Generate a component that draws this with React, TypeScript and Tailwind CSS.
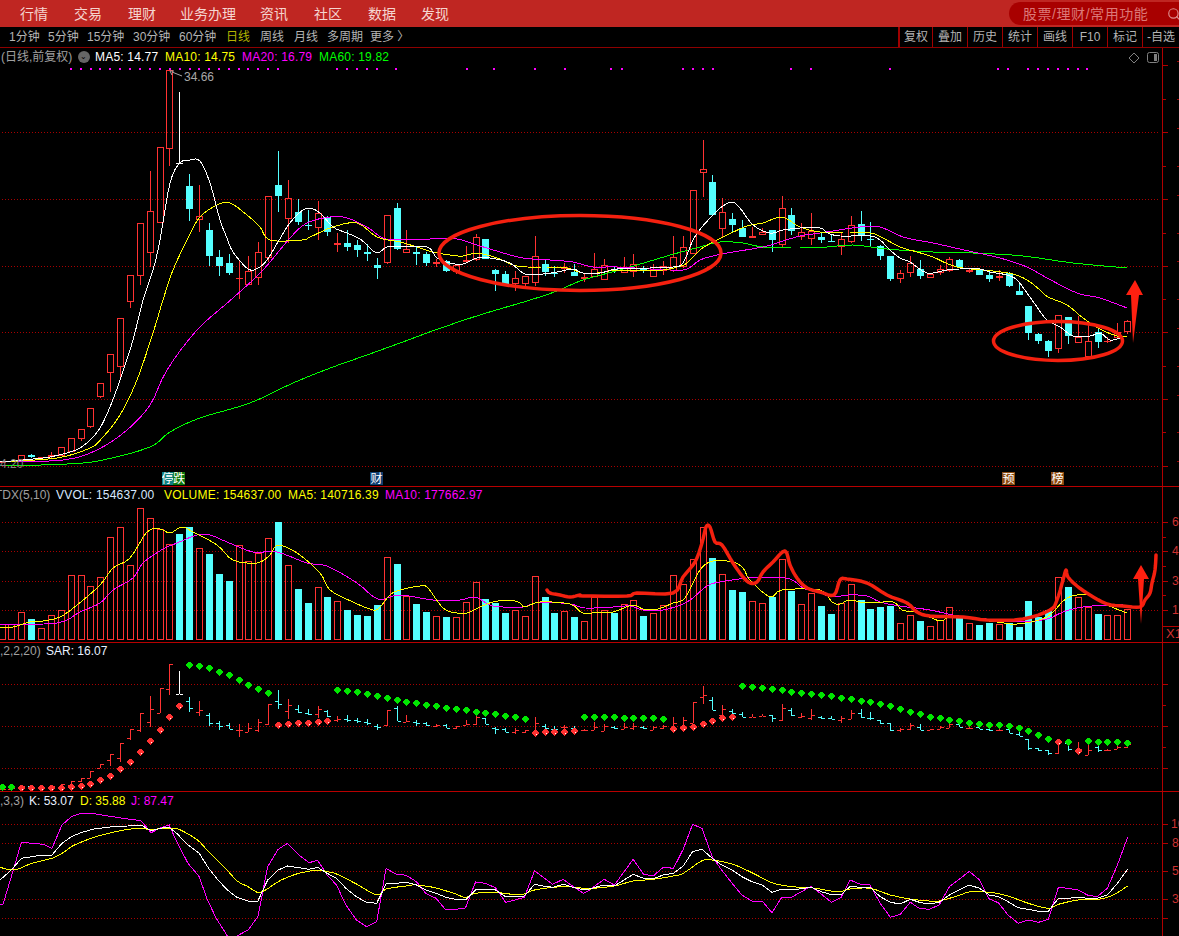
import { Search } from "lucide-react";

type P = [number, number];
const cx = (i: number) => Math.round(1.55 + 9.874 * i);
const ps = (a: P[]) => a.map(([x, y]) => `${x.toFixed(1)},${y.toFixed(1)}`).join(" ");
const smooth = (a: P[]): P[] => {
  const out: P[] = [];
  for (let i = 0; i < a.length - 1; i++) {
    const p0 = a[Math.max(i - 1, 0)];
    const p1 = a[i];
    const p2 = a[i + 1];
    const p3 = a[Math.min(i + 2, a.length - 1)];
    for (let k = 0; k < 4; k++) {
      const t = k / 4;
      const t2 = t * t;
      const t3 = t2 * t;
      const f = (v0: number, v1: number, v2: number, v3: number) =>
        0.5 * (2 * v1 + (v2 - v0) * t + (2 * v0 - 5 * v1 + 4 * v2 - v3) * t2 + (3 * v1 - v0 - 3 * v2 + v3) * t3);
      out.push([f(p0[0], p1[0], p2[0], p3[0]), f(p0[1], p1[1], p2[1], p3[1])]);
    }
  }
  out.push(a[a.length - 1]);
  return out;
};

const vol = [432,432,397,-417,445,406,391,286,286,319,292,172,142,256,85,115,148,192,-162,-142,205,-222,-282,-303,195,243,220,175,-126,256,-327,-369,322,-351,364,-390,-405,-408,-375,232,-252,
348,-372,-396,409,-411,412,367,307,-357,-369,-399,391,409,289,-351,-399,394,-411,424,352,391,-399,373,361,-408,400,376,286,313,238,142,-234,283,-330,-336,364,370,-351,238,-333,
373,340,-378,-402,370,313,-360,-387,-381,-378,430,405,-423,439,420,382,-415,430,-435,-429,432,-429,-441,-363,-411,-390,292,-321,350,381,-402,405,405,388];

const cs: number[][] = [
[462,462,463,463],[461,461,462,462],[455,455,460,460],[454,455,457,458],[457,457,458,458],[452,455,457,458],[447,447,456,456],[438,438,452,452],[429,429,439,441],[408,408,427,428],
[383,383,397,398],[354,354,373,392],[318,318,367,377],[275,275,302,308],[223,223,276,285],[171,211,253,267],[147,147,223,223],[70,70,149,166],[92,163,163,163],[174,186,209,221],
[185,216,220,232],[223,230,256,266],[250,257,266,276],[254,263,273,275],[260,278,279,299],[256,271,285,285],[242,252,278,285],[196,196,258,262],[151,185,196,212],[180,198,219,243],
[199,212,222,225],[210,225,226,230],[201,213,228,240],[216,217,232,236],[233,243,245,252],[230,243,247,251],[240,245,250,257],[244,252,254,261],[258,265,268,279],[215,215,263,264],
[203,208,249,250],[230,249,253,253],[247,252,254,265],[252,254,263,266],[259,262,264,267],[260,261,271,272],[265,265,272,274],[246,260,262,262],[234,237,260,261],[239,239,259,259],
[269,270,274,291],[271,274,284,285],[271,278,284,291],[276,276,284,287],[236,256,283,286],[260,264,272,276],[266,273,274,277],[263,267,269,273],[264,272,276,276],[273,277,279,282],
[253,269,277,277],[259,265,280,280],[266,269,271,273],[257,267,273,273],[254,264,272,277],[266,268,271,273],[264,269,277,277],[261,266,271,275],[236,257,271,272],[236,247,267,268],
[190,190,254,254],[140,169,173,197],[175,182,215,215],[198,212,229,237],[213,219,225,232],[220,228,237,237],[227,236,238,238],[228,232,235,235],[230,230,240,252],[196,208,245,248],
[208,215,231,235],[223,232,237,240],[213,231,239,245],[232,237,240,243],[235,241,242,242],[232,239,247,255],[216,225,242,243],[211,224,236,241],[222,239,240,247],[245,246,256,260],
[256,256,279,281],[270,273,279,283],[256,263,273,277],[260,269,276,279],[273,274,278,278],[265,269,273,275],[257,259,271,272],[259,260,267,268],[268,270,272,273],[268,269,275,275],
[272,275,279,282],[270,276,278,281],[272,273,286,287],[283,291,295,295],[306,306,333,340],[333,334,341,344],[340,341,351,357],[315,315,349,353],[317,317,336,344],[316,337,343,343],
[322,341,357,357],[328,332,342,348],[337,341,342,343],[323,332,338,338],[320,321,332,334],
];

const ma5: P[] = [[0,462],[33,459],[50,457],[70,452],[80,448],[90,440],[100,428],[110,407],[120,380],[133,340],[143,300],[153,270],[160,240],[170,183],[180,163],[190,160],[200,161],[210,183],[220,220],[227,238],[233,252],[248,269],[258,268],[267,260],[278,242],[287,227],[297,215],[308,208],[320,213],[333,227],[347,233],[360,239],[367,245],[377,253],[387,247],[400,247],[427,247],[437,258],[450,263],[463,264],[477,258],[490,258],[510,263],[525,274],[543,274],[557,272],[573,269],[583,273],[600,273],[617,269],[650,268],[673,267],[683,263],[693,240],[702,227],[715,213],[723,206],[732,202],[740,208],[753,225],[770,233],[783,230],[800,228],[820,228],[828,233],[840,236],[870,236],[880,240],[890,250],[900,258],[910,262],[927,273],[947,270],[960,269],[980,269],[990,272],[1007,275],[1017,280],[1027,293],[1037,307],[1047,320],[1060,327],[1073,336],[1090,336],[1100,333],[1110,340],[1120,338]];
const ma10: P[] = [[0,462],[57,458],[90,448],[103,437],[120,415],[137,380],[153,333],[163,300],[173,270],[188,238],[200,217],[217,205],[230,203],[247,215],[260,227],[270,240],[302,240],[310,237],[333,227],[357,223],[377,237],[400,242],[417,247],[433,252],[450,255],[463,256],[477,253],[497,258],[513,265],[527,267],[547,267],[567,268],[583,273],[597,273],[617,270],[637,271],[663,270],[677,267],[687,263],[700,250],[713,242],[727,235],[747,226],[763,223],[782,217],[800,227],[820,232],[843,233],[870,233],[883,238],[900,247],[917,252],[933,257],[957,267],[993,271],[1013,274],[1027,280],[1040,290],[1048,297],[1067,305],[1083,318],[1100,329],[1117,336],[1127,336]];
const ma20: P[] = [[0,462],[63,460],[97,450],[127,430],[150,405],[167,370],[197,330],[233,298],[263,270],[290,238],[307,223],[330,217],[347,218],[367,227],[383,238],[400,240],[430,239],[457,239],[477,245],[500,252],[523,258],[550,260],[573,262],[593,267],[617,267],[670,270],[687,269],[700,260],[717,255],[733,252],[763,247],[777,243],[800,236],[820,233],[860,227],[880,227],[903,237],[933,243],[973,252],[1000,258],[1027,267],[1047,278],[1077,293],[1100,298],[1127,308]];
const ma60: P[] = [[0,466],[67,464],[103,460],[150,447],[170,432],[200,418],[250,403],[293,383],[333,367],[367,355],[400,343],[438,329],[483,314],[527,301],[557,291],[583,280],[627,268],[667,256],[700,247],[720,242],[743,243],[763,247],[800,248],[827,247],[853,245],[887,249],[933,252],[973,253],[1023,256],[1073,263],[1127,268]];

const volY: P[] = [[0,628],[13,627],[30,622],[43,621],[60,617],[77,605],[100,585],[113,568],[130,558],[147,532],[160,529],[170,533],[182,527],[193,532],[217,545],[233,560],[257,563],[270,555],[278,545],[297,553],[320,573],[330,590],[353,602],[370,609],[378,609],[390,595],[400,590],[420,586],[428,588],[443,608],[457,613],[467,613],[480,607],[493,602],[510,600],[520,603],[525,607],[540,602],[570,604],[583,613],[600,612],[613,612],[633,605],[643,609],[658,609],[673,603],[685,598],[700,570],[713,561],[733,562],[743,568],[750,580],[770,597],[782,590],[820,590],[832,602],[840,604],[850,600],[867,603],[893,602],[902,610],[920,613],[940,621],[953,617],[997,622],[1017,624],[1047,617],[1067,598],[1090,595],[1107,605],[1127,613]];
const volM: P[] = [[0,624],[57,623],[80,612],[100,603],[113,590],[133,578],[143,563],[163,549],[177,543],[197,535],[210,535],[227,542],[253,552],[277,552],[307,563],[327,566],[357,583],[378,599],[400,595],[433,600],[460,600],[475,597],[490,605],[503,607],[523,607],[540,602],[570,604],[585,608],[613,607],[630,606],[643,610],[663,610],[687,602],[707,586],[720,582],[747,578],[763,577],[790,579],[803,588],[820,593],[833,597],[848,595],[867,596],[880,602],[900,606],[930,610],[953,615],[977,618],[1020,622],[1047,619],[1063,612],[1083,607],[1123,604]];
const hand: P[] = [[547,590],[550,593],[560,595],[570,597],[580,595],[583,596],[627,596],[637,593],[673,593],[683,577],[695,562],[702,543],[706,527],[710,527],[715,542],[722,545],[733,563],[743,577],[750,583],[757,582],[763,572],[773,562],[785,551],[790,565],[797,578],[807,588],[820,592],[834,595],[840,580],[847,579],[867,583],[887,595],[907,603],[917,612],[930,616],[963,617],[987,620],[1023,619],[1050,610],[1057,600],[1063,580],[1066,570],[1068,577],[1077,586],[1090,595],[1107,604],[1123,606],[1140,607],[1145,600],[1150,593],[1152,583],[1155,570],[1156,555]];

const sarG: Record<number, number> = {0:441,1:440,19:75,20:79,21:84,22:95,23:104,24:120,25:134,26:147,27:158,34:150,35:153,36:156,37:161,38:167,39:173,40:179,41:185,42:188,43:194,44:198,45:204,46:207,47:210,48:216,49:219,50:222,51:227,52:230,53:237,59:230,60:230,61:230,62:230,63:233,64:233,65:233,66:233,67:237,75:137,76:140,77:143,78:146,79:150,80:155,81:158,82:161,83:165,84:168,85:173,86:176,87:182,88:185,89:191,90:197,91:206,92:215,93:221,94:230,95:233,96:239,97:242,98:248,99:251,100:254,101:254,102:257,103:263,104:272,105:284,106:296,108:305,110:302,111:305,112:305,113:305,114:308};
const sarR: Record<number, number> = {2:443,3:443,4:443,5:443,6:443,7:440,8:437,9:432,10:420,11:407,12:386,13:366,14:336,15:303,16:269,17:231,18:198,28:254,29:252,30:248,31:249,32:245,33:242,54:279,55:276,56:276,57:276,58:272,68:267,69:264,70:261,71:251,72:242,73:233,74:230,107:305,109:332};

const kz = (a: P[], off: number): P[] => a.map(([x, y]) => [off + x / 2.66, 790 + y / 3]);
const jA = kz([[0,343],[8,343],[30,260],[57,157],[85,160],[115,163],[138,175],[165,105],[190,80],[215,70],[250,71],[300,80],[340,87],[375,92],[402,128],[430,112],[450,105],[470,155],[500,220],[530,260],[550,325],[575,385],[605,438],[630,438],[660,420],[686,380],[712,230],[740,178],[765,160],[795,195],[822,218],[845,211],[870,255],[895,285],[920,345],[948,390],[975,410],[1002,395],[1027,235],[1052,252],[1080,256],[1108,275],[1132,310],[1160,325],[1186,360],[1212,358],[1238,354],[1265,276],[1290,280],[1318,293],[1345,337],[1370,330],[1395,322],[1422,242],[1445,262],[1470,283],[1498,268],[1525,290],[1552,310],[1568,300]], 0).concat(kz([[0,298],[38,268],[65,285],[115,208],[142,252],[168,258],[195,232],[222,235],[248,178],[273,103],[298,115],[325,200],[350,240],[378,280],[404,315],[431,333],[458,333],[484,368],[510,322],[537,321],[588,289],[615,312],[642,337],[668,322],[692,270],[719,283],[745,285],[772,340],[799,382],[825,373],[852,337],[876,355],[902,358],[929,345],[956,290],[982,268],[1009,244],[1036,270],[1062,327],[1086,338],[1112,375],[1139,400],[1166,390],[1193,397],[1219,388],[1246,292],[1272,295],[1298,300],[1323,315],[1349,320],[1376,295],[1403,225],[1430,142]], 590));
const kA = kz([[0,270],[30,240],[57,205],[85,200],[110,195],[138,195],[165,160],[190,140],[215,128],[250,117],[300,110],[340,108],[375,105],[402,122],[430,114],[450,112],[470,130],[500,165],[530,190],[555,235],[580,270],[605,300],[630,322],[660,333],[686,333],[712,270],[740,240],[765,228],[795,233],[822,238],[845,232],[870,250],[895,265],[920,295],[948,320],[975,337],[1002,340],[1027,282],[1052,280],[1080,277],[1108,285],[1132,300],[1160,310],[1186,322],[1212,328],[1238,330],[1265,300],[1290,297],[1318,300],[1345,320],[1370,320],[1395,318],[1422,283],[1445,288],[1470,292],[1498,283],[1525,292],[1552,300],[1568,297]], 0).concat(kz([[0,296],[38,285],[65,288],[115,253],[142,265],[168,266],[195,255],[222,250],[248,228],[273,185],[298,178],[325,205],[350,225],[378,240],[404,260],[431,275],[458,285],[484,307],[510,298],[537,300],[588,292],[615,305],[642,314],[668,314],[692,289],[719,292],[745,292],[772,320],[799,337],[825,342],[852,328],[876,337],[902,342],[929,337],[956,315],[982,300],[1009,285],[1036,295],[1062,315],[1086,320],[1112,335],[1139,353],[1166,358],[1193,364],[1219,364],[1246,325],[1272,325],[1298,322],[1323,325],[1349,325],[1376,315],[1403,280],[1430,238]], 590));
const dA = kz([[0,232],[38,240],[85,220],[138,205],[165,190],[190,170],[215,157],[250,142],[300,127],[340,118],[375,116],[402,118],[450,115],[480,120],[525,150],[555,185],[600,235],[630,272],[660,290],[692,307],[740,275],[765,262],[795,250],[845,240],[870,245],[895,252],[948,282],[1002,315],[1027,297],[1080,288],[1108,285],[1160,294],[1212,312],[1238,322],[1265,310],[1318,307],[1370,314],[1395,312],[1422,300],[1498,290],[1568,297]], 0).concat(kz([[0,296],[65,288],[115,273],[168,268],[222,258],[248,250],[298,212],[325,210],[378,222],[431,248],[484,278],[537,290],[588,293],[642,303],[668,304],[692,297],[745,295],[799,315],[852,327],[902,333],[929,333],[982,316],[1009,306],[1062,307],[1112,318],[1166,340],[1219,355],[1246,343],[1298,330],[1349,328],[1376,322],[1403,308],[1430,288]], 590));

const RED = "#ff3232";
const CYAN = "#54ffff";
const topDots = [71,81,91,100,110,120,130,140,150,160,170,180,190,199,209,219,229,239,248,258,268,278,337,347,357,367,377,396,467,494,535,565,611,622,683,693,703,713,791,811,890,998,1008,1028,1038,1048,1058,1068,1078,1087];

function Line({ pts, c, round }: { pts: P[]; c: string; round?: boolean }) {
  return <polyline points={ps(round ? smooth(pts) : pts)} fill="none" stroke={c} strokeWidth={1} shapeRendering="crispEdges" />;
}

function Grid({ ys }: { ys: number[] }) {
  return (
    <g shapeRendering="crispEdges">
      {ys.map((y) => (
        <line key={y} x1={2} x2={1160} y1={y + 0.5} y2={y + 0.5} stroke="#a80000" strokeWidth={1} strokeDasharray="1 2" />
      ))}
    </g>
  );
}

function Axis({ top, h, ticks }: { top: number; h: number; ticks: [number, number][] }) {
  return (
    <g shapeRendering="crispEdges">
      <rect x={1162} y={top} width={1} height={h} fill="#b00000" />
      {ticks.map(([y, l]) => (
        <rect key={y} x={1163} y={y} width={l} height={1} fill="#b00000" />
      ))}
    </g>
  );
}

function Hollow({ x, y, h, c }: { x: number; y: number; h: number; c: string }) {
  return (
    <g fill={c}>
      <rect x={x - 3} y={y} width={7} height={1} />
      <rect x={x - 3} y={y + h - 1} width={7} height={1} />
      <rect x={x - 3} y={y} width={1} height={h} />
      <rect x={x + 3} y={y} width={1} height={h} />
    </g>
  );
}

function Panel({ top, h, children, labels }: { top: number; h: number; children: React.ReactNode; labels?: React.ReactNode }) {
  return (
    <div className="relative w-full shrink-0 overflow-hidden border-b border-[#b80000]" style={{ height: h + 1 }}>
      <svg width={1179} height={h} viewBox={`0 ${top} 1179 ${h}`} className="block">
        {children}
      </svg>
      {labels}
    </div>
  );
}

function dot(x: number, y: number) {
  const c = x + 0.5;
  return `${c - 0.5},${y - 3.5} ${c + 0.5},${y - 3.5} ${c + 3.5},${y - 0.5} ${c + 3.5},${y + 0.5} ${c + 0.5},${y + 3.5} ${c - 0.5},${y + 3.5} ${c - 3.5},${y + 0.5} ${c - 3.5},${y - 0.5}`;
}

const navItems: [string, string][] = [["行情", "ml-[20px]"], ["交易", "ml-[26px]"], ["理财", "ml-[26px]"], ["业务办理", "ml-[24px]"], ["资讯", "ml-[24px]"], ["社区", "ml-[26px]"], ["数据", "ml-[26px]"], ["发现", "ml-[25px]"]];
const periods: [string, string, string][] = [["1分钟", "w-[39px]", "text-[#b4b4b4]"], ["5分钟", "w-[39px]", "text-[#b4b4b4]"], ["15分钟", "w-[46px]", "text-[#b4b4b4]"], ["30分钟", "w-[46px]", "text-[#b4b4b4]"], ["60分钟", "w-[47px]", "text-[#b4b4b4]"], ["日线", "w-[34px]", "text-[#b4b400]"], ["周线", "w-[34px]", "text-[#b4b4b4]"], ["月线", "w-[33px]", "text-[#b4b4b4]"], ["多周期", "w-[43px]", "text-[#b4b4b4]"], ["更多 〉", "w-[40px]", "text-[#b4b4b4]"]];
const tools: [string, string][] = [["复权", "w-[33px] border-r"], ["叠加", "w-[35px] border-r"], ["历史", "w-[35px] border-r"], ["统计", "w-[35px] border-r"], ["画线", "w-[35px] border-r"], ["F10", "w-[35px] border-r"], ["标记", "w-[35px] border-r"], ["-自选", "w-[36px]"]];

export default function App() {
  return (
    <div className="relative flex h-[936px] w-[1179px] flex-col overflow-hidden bg-black font-['Liberation_Sans','Noto_Sans_CJK_SC',sans-serif] text-[12px] leading-none">
      <header className="flex h-[27px] shrink-0 items-center bg-[#bf2622]">
        {navItems.map(([t, m]) => (
          <span key={t} className={`${m} whitespace-nowrap text-[14px] text-[#f5d5d0]`}>{t}</span>
        ))}
        <div className="ml-auto flex h-[23px] w-[170px] items-center rounded-l-full bg-[#a80000] pl-[14px]">
          <span className="whitespace-nowrap text-[14px] tracking-[0.55px] text-[#dc7878]">股票/理财/常用功能</span>
          <Search className="ml-[19px] shrink-0 text-[#dc8c8c]" size={14} strokeWidth={2} />
        </div>
      </header>

      <nav className="flex h-[21px] shrink-0 items-center border-b border-[#8e0000]">
        <div className="flex w-[898px] shrink-0 items-center pl-[9px]">
          {periods.map(([t, w, c]) => (
            <span key={t} className={`${w} ${c} whitespace-nowrap`}>{t}</span>
          ))}
        </div>
        <div className="flex h-full shrink-0 items-stretch border-l-2 border-[#a00000]">
          {tools.map(([t, w]) => (
            <span key={t} className={`flex ${w} items-center justify-center whitespace-nowrap border-[#a00000] text-[#b4b4b4]`}>{t}</span>
          ))}
        </div>
      </nav>

      <Panel
        top={48}
        h={438}
        labels={
          <>
            <div className="absolute left-[1px] top-[2px] flex h-[14px] items-center whitespace-nowrap tracking-[0.2px]">
              <span className="w-[77px] tracking-normal text-[#a0a0a0]">(日线,前复权)</span>
              <span className="flex h-[12px] w-[12px] items-center justify-center rounded-full bg-[#666666] text-[8px] text-black">⌄</span>
              <span className="ml-[5px] w-[70px] text-white">MA5: 14.77</span>
              <span className="w-[77px] text-[#ffff00]">MA10: 14.75</span>
              <span className="w-[77px] text-[#ff00ff]">MA20: 16.79</span>
              <span className="text-[#00ff00]">MA60: 19.82</span>
            </div>
            <span className="absolute left-[184px] top-[23px] text-[#a8a8a8]">34.66</span>
            <span className="absolute left-[0px] top-[410px] text-[#808080]">4.20</span>
            <span className="absolute left-[162px] top-[424px] flex h-[13px] text-white">
              <span className="flex w-[11px] items-center justify-center overflow-hidden bg-[#0f7f80]">停</span>
              <span className="flex w-[12px] items-center justify-center overflow-hidden bg-[#0c780c]">跌</span>
            </span>
            <span className="absolute left-[370px] top-[424px] flex h-[13px] w-[13px] items-center justify-center bg-[#103e70] text-white">财</span>
            <span className="absolute left-[1002px] top-[424px] flex h-[13px] w-[13px] items-center justify-center bg-[#8c4a10] text-white">预</span>
            <span className="absolute left-[1051px] top-[424px] flex h-[13px] w-[13px] items-center justify-center bg-[#8c4a10] text-white">榜</span>
          </>
        }
      >
        <Grid ys={[132, 199, 266, 332, 399, 466]} />
        <Axis top={48} h={438} ticks={[[65,5],[99,3],[132,5],[166,3],[199,5],[233,3],[266,5],[299,3],[332,5],[366,3],[399,5],[432,3],[466,5]]} />
        <g shapeRendering="crispEdges" fill="#a00000">
          {[61,99,128,166,195,233,261,299,328,366,395,432,461].map((y) => (
            <rect key={y} x={1177} y={y} width={2} height={1} />
          ))}
        </g>
        <g fill="#ff00ff" shapeRendering="crispEdges">
          {topDots.map((x) => <rect key={x} x={x - 1} y={68} width={2} height={2} />)}
        </g>
        <g shapeRendering="crispEdges">
          {cs.map(([hi, t, b, lo], i) => {
            const c = i === 18 ? "#ffffff" : vol[i] > 0 ? RED : CYAN;
            const x = cx(i);
            const solid = vol[i] < 0 || b - t <= 2;
            return (
              <g key={i}>
                <rect x={x} y={hi} width={1} height={Math.max(t - hi, 0)} fill={c} />
                <rect x={x} y={b} width={1} height={Math.max(lo - b, 0)} fill={c} />
                {solid ? (
                  <rect x={x - 3} y={t} width={7} height={Math.max(b - t, 1)} fill={c} />
                ) : (
                  <Hollow x={x} y={t} h={b - t} c={c} />
                )}
              </g>
            );
          })}
        </g>
        <Line pts={ma60} c="#00ff00" round />
        <Line pts={ma20} c="#ff00ff" round />
        <Line pts={ma10} c="#ffff00" round />
        <Line pts={ma5} c="#ffffff" round />
        <polyline points="182,76 172,72" fill="none" stroke="#a8a8a8" />
        <path d="M170 71 L174 71 M170 71 L172 75" stroke="#a8a8a8" fill="none" />
        <ellipse cx={580} cy={253} rx={141} ry={37.5} fill="none" stroke="#f4200f" strokeWidth={3.5} />
        <ellipse cx={1058} cy={341} rx={64.5} ry={19.5} fill="none" stroke="#f4200f" strokeWidth={3.5} />
        <polygon points="1135,280 1143,295 1139,295 1133,343 1131,295 1126,295" fill="#ff2010" />
        <path d="M1134 53 L1139 58 L1134 63 L1129 58 Z" fill="none" stroke="#808080" />
        <rect x={1147.5} y={52.5} width={11} height={10} rx={2} fill="none" stroke="#808080" />
        <rect x={1154} y={54} width={3} height={7} fill="#808080" />
      </Panel>

      <Panel
        top={487}
        h={155}
        labels={
          <>
            <div className="absolute left-[-5px] top-[1px] flex h-[14px] items-center whitespace-nowrap tracking-[0.2px]">
              <span className="w-[61px] tracking-normal text-[#a0a0a0]">TDX(5,10)</span>
              <span className="w-[108px] text-[#d8e8ff]">VVOL: 154637.00</span>
              <span className="w-[124px] text-[#ffff00]">VOLUME: 154637.00</span>
              <span className="w-[97px] text-[#ffff00]">MA5: 140716.39</span>
              <span className="text-[#ff00ff]">MA10: 177662.97</span>
            </div>
            <span className="absolute left-[1172px] top-[29px] text-[#d03030]">6</span>
            <span className="absolute left-[1172px] top-[58px] text-[#d03030]">4</span>
            <span className="absolute left-[1172px] top-[88px] text-[#d03030]">3</span>
            <span className="absolute left-[1172px] top-[117px] text-[#d03030]">1</span>
            <span className="absolute left-[1166px] top-[140px] whitespace-nowrap text-[13px] text-[#d03030]">X1</span>
          </>
        }
      >
        <Grid ys={[522, 551, 581, 610]} />
        <Axis top={487} h={155} ticks={[[522,5],[537,3],[551,5],[566,3],[581,5],[595,3],[610,5],[626,16]]} />
        <g shapeRendering="crispEdges">
          {vol.map((z, i) => {
            const y = Math.round(480 + Math.abs(z) / 3);
            const x = cx(i);
            return z < 0 ? (
              <rect key={i} x={x - 3} y={y} width={7} height={640 - y} fill={CYAN} />
            ) : (
              <Hollow key={i} x={x} y={y} h={640 - y} c={RED} />
            );
          })}
        </g>
        <Line pts={volM} c="#ff00ff" round />
        <Line pts={volY} c="#ffff00" round />
        <polyline points={ps(smooth(hand))} fill="none" stroke="#f4200f" strokeWidth={3.5} strokeLinejoin="round" strokeLinecap="round" />
        <polygon points="1141,565 1149,579 1144,579 1141,624 1138,579 1133,579" fill="#ff2010" />
      </Panel>

      <Panel
        top={643}
        h={148}
        labels={
          <div className="absolute left-[0px] top-[1px] flex h-[14px] items-center whitespace-nowrap">
            <span className="w-[46px] text-[#a0a0a0]">,2,2,20)</span>
            <span className="text-[#e8f0ff]">SAR: 16.07</span>
          </div>
        }
      >
        <Grid ys={[684, 726, 768]} />
        <Axis top={643} h={148} ticks={[[684,5],[705,3],[726,5],[747,3],[768,5]]} />
        <g shapeRendering="crispEdges">
          {cs.map(([hi, t, b, lo], i) => {
            const c = i === 18 ? "#ffffff" : vol[i] > 0 ? RED : CYAN;
            const x = cx(i);
            const m = (v: number) => Math.round(664 + (v - 70) * 0.318);
            const up = vol[i] > 0;
            return (
              <g key={i}>
                <rect x={x} y={m(hi)} width={1} height={Math.max(m(lo) - m(hi), 1)} fill={c} />
                <rect x={x - 3} y={m(up ? b : t)} width={3} height={1} fill={c} />
                <rect x={x + 1} y={m(up ? t : b)} width={3} height={1} fill={c} />
              </g>
            );
          })}
        </g>
        <g shapeRendering="crispEdges">
          {Object.entries(sarG).map(([k, v]) => (
            <polygon key={k} points={dot(cx(+k), Math.round(640 + v / 3))} fill="#00e600" />
          ))}
          {Object.entries(sarR).map(([k, v]) => {
            const x = cx(+k);
            const y = Math.round(640 + v / 3);
            return (
              <g key={k}>
                <polygon points={dot(x, y)} fill="#ff3232" />
                <rect x={x + 1} y={y + 1} width={1} height={1} fill="#ffffff" />
              </g>
            );
          })}
        </g>
      </Panel>

      <div className="relative w-full flex-1 overflow-hidden">
        <svg width={1179} height={144} viewBox="0 792 1179 144" className="block">
          <Grid ys={[824, 843, 871, 899, 918]} />
          <Axis top={792} h={144} ticks={[[824,5],[843,5],[871,5],[899,5],[918,5]]} />
          <Line pts={jA} c="#ff00ff" />
          <Line pts={dA} c="#ffff00" round />
          <Line pts={kA} c="#ffffff" />
        </svg>
        <div className="absolute left-[0px] top-[2px] flex h-[14px] items-center whitespace-nowrap">
          <span className="w-[29px] text-[#a0a0a0]">,3,3)</span>
          <span className="w-[51px] text-[#e8f0ff]">K: 53.07</span>
          <span className="w-[51px] text-[#ffff00]">D: 35.88</span>
          <span className="text-[#ff00ff]">J: 87.47</span>
        </div>
        <span className="absolute left-[1171px] top-[26px] text-[#d03030]">10</span>
        <span className="absolute left-[1172px] top-[45px] text-[#d03030]">8</span>
        <span className="absolute left-[1172px] top-[73px] text-[#d03030]">5</span>
        <span className="absolute left-[1172px] top-[101px] text-[#d03030]">3</span>
      </div>
    </div>
  );
}
